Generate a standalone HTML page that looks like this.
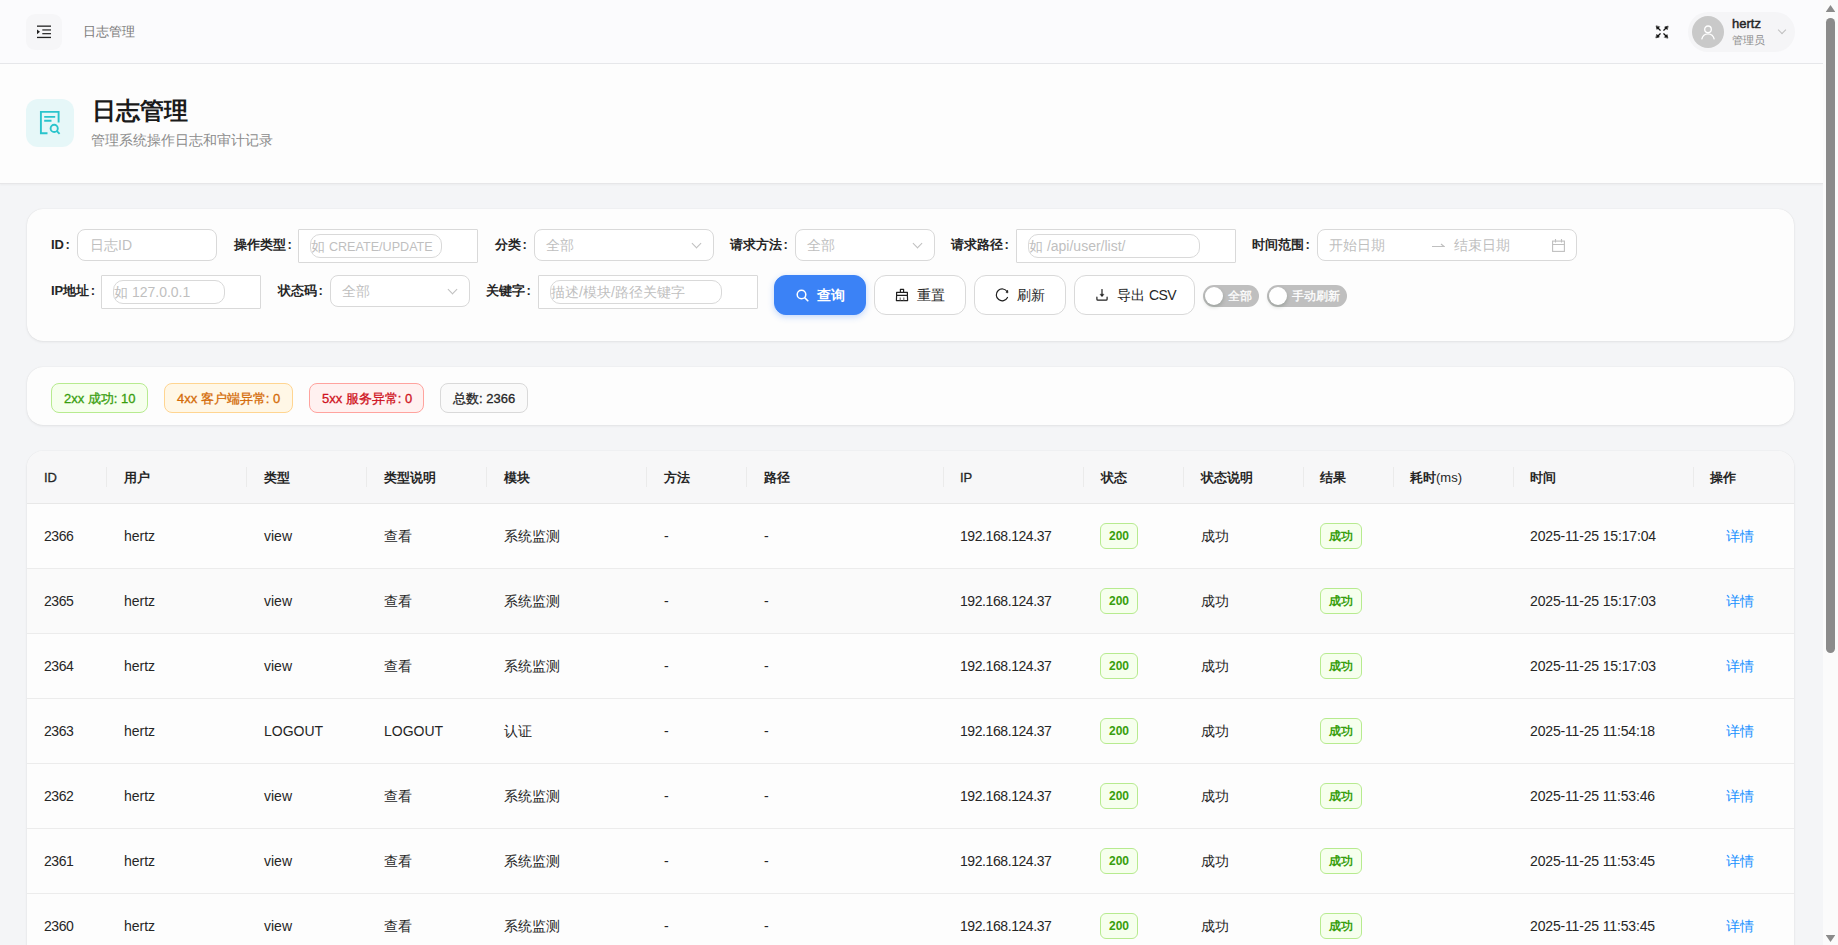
<!DOCTYPE html>
<html><head><meta charset="utf-8">
<style>
*{box-sizing:border-box;margin:0;padding:0}
html,body{width:1838px;height:945px;overflow:hidden}
body{font-family:"Liberation Sans",sans-serif;background:#f4f5f7;color:#262626;position:relative;font-size:14px}
.a{position:absolute}
svg{display:block}
#hdr{left:0;top:0;width:1823px;height:64px;background:#fbfbfd;border-bottom:1px solid #e6e7ea;box-shadow:0 1px 2px rgba(0,0,0,0.03)}
#menu{left:26px;top:14px;width:36px;height:36px;border-radius:9px;background:#f6f6f8}
#crumb{left:83px;top:23px;font-size:13px;color:#7a7a7a;line-height:18px}
#pill{left:1688px;top:12px;width:107px;height:40px;border-radius:20px;background:#f5f5f7}
#avatar{left:1692px;top:16px;width:32px;height:32px;border-radius:50%;background:#c9c9c9}
#uname{left:1732px;top:16px;font-size:13px;font-weight:normal;-webkit-text-stroke:0.45px #262626;color:#262626;line-height:16px}
#urole{left:1732px;top:33px;font-size:11px;color:#8c8c8c;line-height:14px}
#phead{left:0;top:64px;width:1823px;height:120px;background:#fdfdfd;border-bottom:1px solid #e6e6e8;box-shadow:0 1px 2px rgba(0,0,0,0.04)}
#picon{left:26px;top:99px;width:48px;height:48px;border-radius:12px;background:#e6f7f8}
#ptitle{left:92px;top:96px;font-size:24px;font-weight:bold;line-height:30px;color:#1a1a1a}
#psub{left:91px;top:131px;font-size:14px;color:#8c8c8c;line-height:18px}
.card{position:absolute;left:27px;width:1767px;background:#fdfdfd;border-radius:16px;box-shadow:0 0 1px rgba(0,0,0,0.12),0 1px 3px rgba(0,0,0,0.07)}
#filter{top:209px;height:132px}
#stats{top:367px;height:58px}
#table{top:451px;height:520px;overflow:hidden}
.lbl{position:absolute;font-size:13px;font-weight:bold;color:#262626;line-height:18px;white-space:nowrap}
.inp{position:absolute;height:32px;border:1px solid #d9d9d9;border-radius:8px;background:#fff;font-size:14px;color:#bfbfbf;line-height:30px;padding-left:11px;white-space:nowrap}
.box{position:absolute;height:34px;border:1px solid #d9d9d9;border-radius:1px;background:#fff}
.inner{position:absolute;left:11px;top:4px;height:24px;border:1px solid #d9d9d9;border-radius:10px;line-height:22px;padding-left:0;font-size:14px;color:#bfbfbf;white-space:nowrap;overflow:hidden}
.chev{position:absolute;right:13px;top:10px;width:7px;height:7px;border-right:1px solid #bfbfbf;border-bottom:1px solid #bfbfbf;transform:rotate(45deg)}
.btn{position:absolute;top:275px;height:40px;border-radius:12px;border:1px solid #d9d9d9;background:#fff;font-size:14px;line-height:38px;color:#262626;white-space:nowrap}
.btn svg{position:absolute;top:13px}
.btn span{position:absolute;top:0}
#qbtn{left:774px;width:92px;background:#3b82f6;border-color:#3b82f6;color:#fff;font-weight:bold;box-shadow:0 2px 6px rgba(59,130,246,0.3)}
.sw{position:absolute;top:285px;height:22px;border-radius:11px;background:#bfbfbf;color:#fff;font-size:12px;line-height:22px;white-space:nowrap}
.sw i{position:absolute;left:2px;top:2px;width:18px;height:18px;border-radius:50%;background:#fff;box-shadow:0 2px 4px rgba(0,35,11,0.2)}
.sw span{position:absolute;top:0;-webkit-text-stroke:0.3px #fff}

.sep{top:467px;width:1px;height:20px;background:#ebebeb}
.th{top:469px;font-size:13px;font-weight:bold;color:#262626;line-height:18px;white-space:nowrap}
.tr{left:27px;width:1767px;height:65px;border-bottom:1px solid #ececec}
.td{font-size:14px;color:#262626;line-height:18px;white-space:nowrap}
.link{color:#1890ff}
.tag200,.tagok{height:26px;border:1px solid #b7eb8f;background:#f6ffed;color:#389e0d;border-radius:6px;font-size:12px;font-weight:bold;line-height:24px;padding:0;text-align:center;white-space:nowrap}
.tag200{width:38px}.tagok{width:42px}
.stag{position:absolute;top:383px;height:30px;border-radius:8px;border:1px solid;font-size:13px;line-height:30px;-webkit-text-stroke:0.3px currentColor;padding-left:12px;white-space:nowrap}
#scroll{left:1823px;top:0;width:15px;height:945px;background:#fbfbfb}
#thumb{left:1826px;top:18px;width:9px;height:635px;border-radius:5px;background:#8b8b8b}
</style></head><body>
<!-- top header -->
<div id="hdr" class="a"></div>
<div id="menu" class="a">
 <svg class="a" style="left:11px;top:11px" width="14" height="14" viewBox="0 0 14 14">
  <rect x="0" y="0.5" width="14" height="1.3" fill="#222"/>
  <rect x="5.3" y="4.3" width="8.7" height="1.3" fill="#333"/>
  <rect x="5.3" y="8" width="8.7" height="1.3" fill="#333"/>
  <rect x="0" y="11.8" width="14" height="1.3" fill="#222"/>
  <path d="M0 4.4 L3 6.8 L0 9.2 Z" fill="#222"/>
 </svg>
</div>
<div id="crumb" class="a">日志管理</div>

<svg class="a" style="left:1650px;top:20px" width="24" height="24" viewBox="1650 20 24 24" fill="none" stroke="#111" stroke-width="1.25" stroke-linecap="round">
 <path d="M1657.97 27.97 L1660.20 30.20 M1666.03 27.97 L1663.80 30.20 M1657.97 36.03 L1660.20 33.80 M1666.03 36.03 L1663.80 33.80"/>
 <path d="M1656.20 26.20 L1656.98 29.38 L1659.38 26.98 Z M1667.80 26.20 L1664.62 26.98 L1667.02 29.38 Z M1656.20 37.80 L1659.38 37.02 L1656.98 34.62 Z M1667.80 37.80 L1667.02 34.62 L1664.62 37.02 Z" fill="#111" stroke-width="0.6" stroke-linejoin="round"/>
</svg>
<div id="pill" class="a"></div>
<div id="avatar" class="a">
 <svg class="a" style="left:9px;top:9px" width="16" height="16" viewBox="0 0 16 16" fill="none" stroke="#fff" stroke-width="1.3">
  <circle cx="7" cy="4.3" r="3.3"/>
  <path d="M0.7 14.4 C1.6 10.6 4.2 8.9 7 8.9 C9.8 8.9 12.4 10.6 13.3 14.4"/>
 </svg>
</div>
<div id="uname" class="a">hertz</div>
<div id="urole" class="a">管理员</div>
<div class="a" style="left:1779px;top:27px;width:6px;height:6px;border-right:1px solid #bfbfbf;border-bottom:1px solid #bfbfbf;transform:rotate(45deg)"></div>

<!-- page header -->
<div id="phead" class="a"></div>
<div id="picon" class="a"></div>
<svg class="a" style="left:36px;top:106px" width="30" height="32" viewBox="36 106 30 32" fill="none" stroke="#2ac4cc" stroke-width="1.9">
  <path d="M47.5 133.2 H40.9 V111.9 H58.6 V122.5"/>
  <path d="M44.2 116.9 H55.2 M44.2 120.8 H51.5"/>
  <circle cx="54.2" cy="128.4" r="3.6"/>
  <path d="M56.9 131.1 L59.6 133.8"/>
</svg>
<div id="ptitle" class="a">日志管理</div>
<div id="psub" class="a">管理系统操作日志和审计记录</div>

<!-- filter card -->
<div id="filter" class="card"></div>
<div class="lbl" style="left:51px;top:236px">ID<span style="margin-left:1.5px">:</span></div>
<div class="inp" style="left:77px;top:229px;width:140px;padding-left:12px">日志ID</div>
<div class="lbl" style="left:234px;top:236px">操作类型<span style="margin-left:1.5px">:</span></div>
<div class="box" style="left:298px;top:229px;width:180px"><div class="inner" style="width:132px">如 <span style="font-size:12.6px">CREATE/UPDATE</span></div></div>
<div class="lbl" style="left:495px;top:236px">分类<span style="margin-left:1.5px">:</span></div>
<div class="inp" style="left:534px;top:229px;width:180px">全部<i class="chev"></i></div>
<div class="lbl" style="left:730px;top:236px">请求方法<span style="margin-left:1.5px">:</span></div>
<div class="inp" style="left:795px;top:229px;width:140px">全部<i class="chev"></i></div>
<div class="lbl" style="left:951px;top:236px">请求路径<span style="margin-left:1.5px">:</span></div>
<div class="box" style="left:1016px;top:229px;width:220px"><div class="inner" style="width:172px">如 /api/user/list/</div></div>
<div class="lbl" style="left:1252px;top:236px">时间范围<span style="margin-left:1.5px">:</span></div>
<div class="inp" style="left:1317px;top:229px;width:260px">开始日期<span class="a" style="left:136px;top:0">结束日期</span>
 <svg class="a" style="left:114px;top:12px" width="13" height="6" viewBox="0 0 13 6" fill="none" stroke="#bfbfbf" stroke-width="1.1"><path d="M0 4.5 H12 L9 2"/></svg>
 <svg class="a" style="left:234px;top:9px" width="13" height="13" viewBox="0 0 13 13" fill="none" stroke="#bfbfbf" stroke-width="1.1"><rect x="0.6" y="2.1" width="11.8" height="10.3"/><path d="M0.6 5.5 H12.4 M3.5 0 V3.5 M9.5 0 V3.5"/></svg>
</div>

<div class="lbl" style="left:51px;top:282px">IP地址<span style="margin-left:1.5px">:</span></div>
<div class="box" style="left:101px;top:275px;width:160px"><div class="inner" style="width:112px">如 127.0.0.1</div></div>
<div class="lbl" style="left:278px;top:282px">状态码<span style="margin-left:1.5px">:</span></div>
<div class="inp" style="left:330px;top:275px;width:140px">全部<i class="chev"></i></div>
<div class="lbl" style="left:486px;top:282px">关键字<span style="margin-left:1.5px">:</span></div>
<div class="box" style="left:538px;top:275px;width:220px"><div class="inner" style="width:172px">描述/模块/路径关键字</div></div>

<div id="qbtn" class="btn">
 <svg style="left:21px" width="13" height="13" viewBox="0 0 13 13" fill="none" stroke="#fff" stroke-width="1.5"><circle cx="5.5" cy="5.5" r="4.3"/><path d="M8.6 8.6 L12.3 12.3"/></svg>
 <span style="left:42px">查询</span>
</div>
<div class="btn" style="left:874px;width:92px">
 
 <span style="left:42px">重置</span>
</div>
<div class="btn" style="left:974px;width:92px">
 
 <span style="left:42px">刷新</span>
</div>
<div class="btn" style="left:1074px;width:121px">
 
 <span style="left:42px">导出 <b style="font-weight:normal;letter-spacing:-0.5px">CSV</b></span>
</div>
<svg class="a" style="left:890px;top:282px" width="30" height="26" viewBox="890 282 30 26" fill="none" stroke="#1f1f1f" stroke-width="1.2" stroke-linejoin="round">
 <path d="M900.4 292.4 V289.3 H903.6 V292.4 M896.6 292.4 H907.4 V295.4 H896.6 Z M896.6 295.4 L896.4 300.6 H907.6 L907.4 295.4"/>
 <path d="M900.2 297.6 V300.4 M903.8 297.6 V300.4" stroke-width="1.1" stroke="#666"/>
</svg>
<svg class="a" style="left:990px;top:282px" width="30" height="26" viewBox="990 282 30 26" fill="none" stroke="#1f1f1f" stroke-width="1.2" stroke-linecap="round">
 <path d="M1007.2 291.7 A5.9 5.9 0 1 0 1007.5 297.5"/>
 <path d="M1006.4 292.2 L1007.6 290.3 L1007.8 292.4 Z" fill="#1f1f1f" stroke-width="0.8"/>
</svg>
<svg class="a" style="left:1090px;top:282px" width="30" height="26" viewBox="1090 282 30 26" fill="none" stroke="#1f1f1f" stroke-width="1.2" stroke-linecap="round">
 <path d="M1102 289.6 V295.6"/>
 <path d="M1100.3 294.6 L1102 296.6 L1103.7 294.6 Z" fill="#1f1f1f" stroke-width="0.6"/>
 <path d="M1096.9 297.2 V299.2 Q1096.9 300.2 1097.9 300.2 H1106.1 Q1107.1 300.2 1107.1 299.2 V297.2"/>
</svg>
<div class="sw" style="left:1203px;width:56px"><i></i><span style="left:25px">全部</span></div>
<div class="sw" style="left:1267px;width:80px"><i></i><span style="left:25px">手动刷新</span></div>

<!-- stats -->
<div id="stats" class="card"></div>
<div class="stag" style="left:51px;width:97px;background:#f6ffed;border-color:#b7eb8f;color:#389e0d">2xx 成功: 10</div>
<div class="stag" style="left:164px;width:129px;background:#fff7e6;border-color:#ffd591;color:#d46b08">4xx 客户端异常: 0</div>
<div class="stag" style="left:309px;width:115px;background:#fff1f0;border-color:#ffa39e;color:#cf1322">5xx 服务异常: 0</div>
<div class="stag" style="left:440px;width:88px;background:#fafafa;border-color:#d9d9d9;color:#262626">总数: 2366</div>

<!-- table -->
<div id="table" class="card"></div>
<div class="a" style="left:27px;top:451px;width:1767px;height:53px;background:#f7f7f8;border-radius:16px 16px 0 0;border-bottom:1px solid #e8e8e8"></div>
<div class="a sep" style="left:106px"></div>
<div class="a sep" style="left:246px"></div>
<div class="a sep" style="left:366px"></div>
<div class="a sep" style="left:486px"></div>
<div class="a sep" style="left:646px"></div>
<div class="a sep" style="left:746px"></div>
<div class="a sep" style="left:943px"></div>
<div class="a sep" style="left:1083px"></div>
<div class="a sep" style="left:1183px"></div>
<div class="a sep" style="left:1303px"></div>
<div class="a sep" style="left:1393px"></div>
<div class="a sep" style="left:1513px"></div>
<div class="a sep" style="left:1693px"></div>
<div class="a th" style="left:44px;font-weight:normal;-webkit-text-stroke:0.3px #262626">ID</div>
<div class="a th" style="left:124px">用户</div>
<div class="a th" style="left:264px">类型</div>
<div class="a th" style="left:384px">类型说明</div>
<div class="a th" style="left:504px">模块</div>
<div class="a th" style="left:664px">方法</div>
<div class="a th" style="left:764px">路径</div>
<div class="a th" style="left:960px;font-weight:normal;-webkit-text-stroke:0.3px #262626">IP</div>
<div class="a th" style="left:1101px">状态</div>
<div class="a th" style="left:1201px">状态说明</div>
<div class="a th" style="left:1320px">结果</div>
<div class="a th" style="left:1410px">耗时<span style="font-weight:normal">(ms)</span></div>
<div class="a th" style="left:1530px">时间</div>
<div class="a th" style="left:1710px">操作</div>
<div class="a tr" style="top:504px;background:#fdfdfd"></div>
<div class="a td" style="left:44px;top:527px;letter-spacing:-0.45px">2366</div>
<div class="a td" style="left:124px;top:527px">hertz</div>
<div class="a td" style="left:264px;top:527px">view</div>
<div class="a td" style="left:384px;top:527px">查看</div>
<div class="a td" style="left:504px;top:527px">系统监测</div>
<div class="a td" style="left:664px;top:527px">-</div>
<div class="a td" style="left:764px;top:527px">-</div>
<div class="a td" style="left:960px;top:527px;letter-spacing:-0.42px">192.168.124.37</div>
<div class="a td" style="left:1201px;top:527px">成功</div>
<div class="a td" style="left:1410px;top:527px"></div>
<div class="a td" style="left:1530px;top:527px;letter-spacing:-0.16px">2025-11-25 15:17:04</div>
<div class="a tag200" style="left:1100px;top:523px">200</div>
<div class="a tagok" style="left:1320px;top:523px">成功</div>
<div class="a td link" style="left:1726px;top:527px">详情</div>
<div class="a tr" style="top:569px;background:#fafafa"></div>
<div class="a td" style="left:44px;top:592px;letter-spacing:-0.45px">2365</div>
<div class="a td" style="left:124px;top:592px">hertz</div>
<div class="a td" style="left:264px;top:592px">view</div>
<div class="a td" style="left:384px;top:592px">查看</div>
<div class="a td" style="left:504px;top:592px">系统监测</div>
<div class="a td" style="left:664px;top:592px">-</div>
<div class="a td" style="left:764px;top:592px">-</div>
<div class="a td" style="left:960px;top:592px;letter-spacing:-0.42px">192.168.124.37</div>
<div class="a td" style="left:1201px;top:592px">成功</div>
<div class="a td" style="left:1410px;top:592px"></div>
<div class="a td" style="left:1530px;top:592px;letter-spacing:-0.16px">2025-11-25 15:17:03</div>
<div class="a tag200" style="left:1100px;top:588px">200</div>
<div class="a tagok" style="left:1320px;top:588px">成功</div>
<div class="a td link" style="left:1726px;top:592px">详情</div>
<div class="a tr" style="top:634px;background:#fdfdfd"></div>
<div class="a td" style="left:44px;top:657px;letter-spacing:-0.45px">2364</div>
<div class="a td" style="left:124px;top:657px">hertz</div>
<div class="a td" style="left:264px;top:657px">view</div>
<div class="a td" style="left:384px;top:657px">查看</div>
<div class="a td" style="left:504px;top:657px">系统监测</div>
<div class="a td" style="left:664px;top:657px">-</div>
<div class="a td" style="left:764px;top:657px">-</div>
<div class="a td" style="left:960px;top:657px;letter-spacing:-0.42px">192.168.124.37</div>
<div class="a td" style="left:1201px;top:657px">成功</div>
<div class="a td" style="left:1410px;top:657px"></div>
<div class="a td" style="left:1530px;top:657px;letter-spacing:-0.16px">2025-11-25 15:17:03</div>
<div class="a tag200" style="left:1100px;top:653px">200</div>
<div class="a tagok" style="left:1320px;top:653px">成功</div>
<div class="a td link" style="left:1726px;top:657px">详情</div>
<div class="a tr" style="top:699px;background:#fdfdfd"></div>
<div class="a td" style="left:44px;top:722px;letter-spacing:-0.45px">2363</div>
<div class="a td" style="left:124px;top:722px">hertz</div>
<div class="a td" style="left:264px;top:722px">LOGOUT</div>
<div class="a td" style="left:384px;top:722px">LOGOUT</div>
<div class="a td" style="left:504px;top:722px">认证</div>
<div class="a td" style="left:664px;top:722px">-</div>
<div class="a td" style="left:764px;top:722px">-</div>
<div class="a td" style="left:960px;top:722px;letter-spacing:-0.42px">192.168.124.37</div>
<div class="a td" style="left:1201px;top:722px">成功</div>
<div class="a td" style="left:1410px;top:722px"></div>
<div class="a td" style="left:1530px;top:722px;letter-spacing:-0.16px">2025-11-25 11:54:18</div>
<div class="a tag200" style="left:1100px;top:718px">200</div>
<div class="a tagok" style="left:1320px;top:718px">成功</div>
<div class="a td link" style="left:1726px;top:722px">详情</div>
<div class="a tr" style="top:764px;background:#fdfdfd"></div>
<div class="a td" style="left:44px;top:787px;letter-spacing:-0.45px">2362</div>
<div class="a td" style="left:124px;top:787px">hertz</div>
<div class="a td" style="left:264px;top:787px">view</div>
<div class="a td" style="left:384px;top:787px">查看</div>
<div class="a td" style="left:504px;top:787px">系统监测</div>
<div class="a td" style="left:664px;top:787px">-</div>
<div class="a td" style="left:764px;top:787px">-</div>
<div class="a td" style="left:960px;top:787px;letter-spacing:-0.42px">192.168.124.37</div>
<div class="a td" style="left:1201px;top:787px">成功</div>
<div class="a td" style="left:1410px;top:787px"></div>
<div class="a td" style="left:1530px;top:787px;letter-spacing:-0.16px">2025-11-25 11:53:46</div>
<div class="a tag200" style="left:1100px;top:783px">200</div>
<div class="a tagok" style="left:1320px;top:783px">成功</div>
<div class="a td link" style="left:1726px;top:787px">详情</div>
<div class="a tr" style="top:829px;background:#fdfdfd"></div>
<div class="a td" style="left:44px;top:852px;letter-spacing:-0.45px">2361</div>
<div class="a td" style="left:124px;top:852px">hertz</div>
<div class="a td" style="left:264px;top:852px">view</div>
<div class="a td" style="left:384px;top:852px">查看</div>
<div class="a td" style="left:504px;top:852px">系统监测</div>
<div class="a td" style="left:664px;top:852px">-</div>
<div class="a td" style="left:764px;top:852px">-</div>
<div class="a td" style="left:960px;top:852px;letter-spacing:-0.42px">192.168.124.37</div>
<div class="a td" style="left:1201px;top:852px">成功</div>
<div class="a td" style="left:1410px;top:852px"></div>
<div class="a td" style="left:1530px;top:852px;letter-spacing:-0.16px">2025-11-25 11:53:45</div>
<div class="a tag200" style="left:1100px;top:848px">200</div>
<div class="a tagok" style="left:1320px;top:848px">成功</div>
<div class="a td link" style="left:1726px;top:852px">详情</div>
<div class="a tr" style="top:894px;background:#fdfdfd"></div>
<div class="a td" style="left:44px;top:917px;letter-spacing:-0.45px">2360</div>
<div class="a td" style="left:124px;top:917px">hertz</div>
<div class="a td" style="left:264px;top:917px">view</div>
<div class="a td" style="left:384px;top:917px">查看</div>
<div class="a td" style="left:504px;top:917px">系统监测</div>
<div class="a td" style="left:664px;top:917px">-</div>
<div class="a td" style="left:764px;top:917px">-</div>
<div class="a td" style="left:960px;top:917px;letter-spacing:-0.42px">192.168.124.37</div>
<div class="a td" style="left:1201px;top:917px">成功</div>
<div class="a td" style="left:1410px;top:917px"></div>
<div class="a td" style="left:1530px;top:917px;letter-spacing:-0.16px">2025-11-25 11:53:45</div>
<div class="a tag200" style="left:1100px;top:913px">200</div>
<div class="a tagok" style="left:1320px;top:913px">成功</div>
<div class="a td link" style="left:1726px;top:917px">详情</div>

<div id="scroll" class="a"></div>
<div id="thumb" class="a"></div>
<svg class="a" style="left:1823px;top:0" width="15" height="945" viewBox="1823 0 15 945">
 <path d="M1830.5 5 L1835 11.5 Q1835.3 12 1834.6 12 H1826.4 Q1825.7 12 1826 11.5 Z" fill="#8b8b8b"/>
 <path d="M1830.5 942 L1835 935.5 Q1835.3 935 1834.6 935 H1826.4 Q1825.7 935 1826 935.5 Z" fill="#8b8b8b"/>
</svg>

</body></html>
